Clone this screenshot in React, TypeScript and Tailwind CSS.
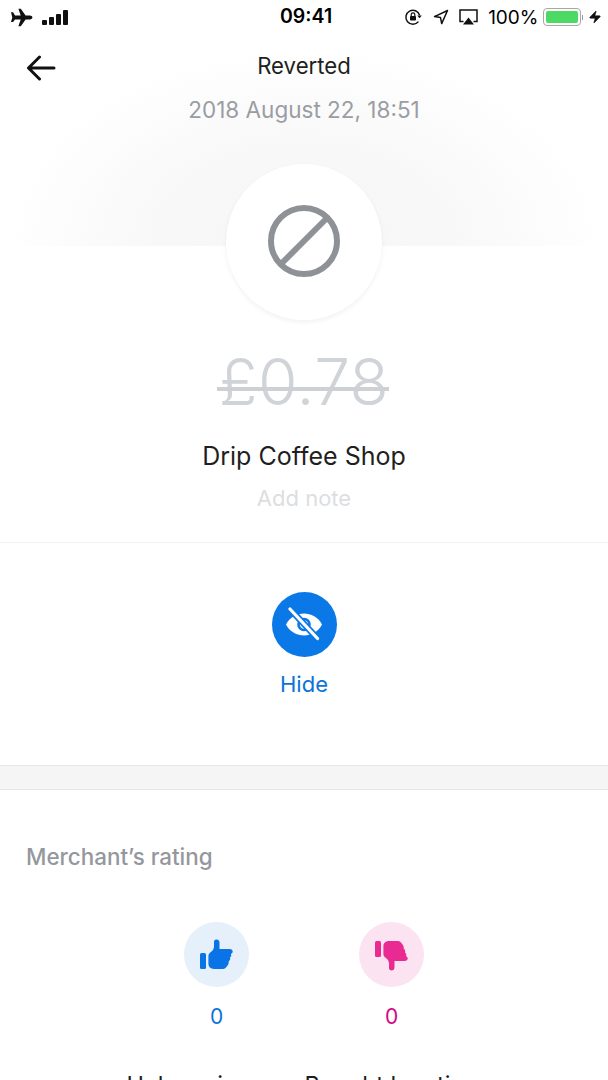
import React from 'react';
import { Zap } from 'lucide-react';

const font = "font-['Inter','Roboto',sans-serif]";

const StatusBar = () => (
  <div className="relative z-10 flex h-[34px] items-center justify-between pl-[9px] pr-[6px] text-black">
    <div className="flex items-center gap-[9px]">
      {/* airplane */}
      <svg width="24" height="19" viewBox="0 0 24 18" fill="#111">
        <path d="M9.4 0.2h2.4l4.8 6.9h4.2c1.6 0 2.6.8 2.6 1.9s-1 1.9-2.6 1.9h-4.2l-4.8 6.9H9.4l2.3-6.9H6l-1.9 2.5H2L3.3 9 2 3.8h2.1L6 7.1h5.7z" />
      </svg>
      <div className="flex items-end gap-[2px]">
        <div className="h-[5px] w-[5px] rounded-[1px] bg-[#111]" />
        <div className="h-[8px] w-[5px] rounded-[1px] bg-[#111]" />
        <div className="h-[11px] w-[5px] rounded-[1px] bg-[#111]" />
        <div className="h-[15px] w-[5px] rounded-[1px] bg-[#111]" />
      </div>
    </div>
    <div className="absolute left-[280px] top-[5px] text-[19.5px] leading-[23px] font-semibold">09:41</div>
    <div className="flex items-center">
      {/* rotation lock */}
      <svg width="18" height="18" viewBox="0 0 18 18" fill="none" className="mr-[11px]">
        <path d="M15.6 7.2A7 7 0 1 0 14.4 13.6" stroke="#111" strokeWidth="1.5" />
        <path d="M13.2 7.4h4.6l-2.3 2.8z" fill="#111" />
        <rect x="6" y="8" width="6" height="4.6" rx="0.8" fill="#111" />
        <path d="M7.2 8V6.6a1.8 1.8 0 0 1 3.6 0V8" stroke="#111" strokeWidth="1.2" />
      </svg>
      {/* location */}
      <svg width="16" height="16" viewBox="0 0 16 16" fill="none" className="mr-[10px]">
        <path d="M14.5 1.5 1.5 7.6l6 1 1.2 6z" stroke="#111" strokeWidth="1.5" strokeLinejoin="round" />
      </svg>
      {/* airplay */}
      <svg width="19" height="17" viewBox="0 0 19 17" fill="none" className="mr-[10px]">
        <path d="M4.5 12.5H1V1h17v11.5h-3.5" stroke="#111" strokeWidth="1.5" />
        <path d="M9.5 8.5 15 15.5H4z" fill="#111" />
      </svg>
      <span className="mr-[4px] text-[19px] leading-[23px]">100%</span>
      <div className="flex h-[18px] w-[38px] items-center rounded-[4px] border border-[#a8a8a8] p-[2px]">
        <div className="h-full w-full rounded-[2px] bg-[#4cd964]" />
      </div>
      <div className="ml-[1px] mr-[5px] h-[5px] w-[1.5px] bg-[#999]" />
      <Zap size={14} fill="#111" stroke="#111" strokeWidth={1} />
    </div>
  </div>
);

const BackArrow = () => (
  <svg width="30" height="26" viewBox="0 0 30 26" fill="none" className="absolute left-[26px] top-[21px]">
    <path d="M28 13H3M13.5 2 2.5 13l11 11" stroke="#111" strokeWidth="3" strokeLinecap="round" strokeLinejoin="round" />
  </svg>
);

const EyeOff = () => (
  <svg width="36" height="36" viewBox="0 0 36 36" fill="none">
    <path d="M0 17.5C4 10 11 6.5 18 6.5s14 3.5 18 11c-4 7.500-11 11-18 11s-14-3.500-18-11z" fill="#fff" />
    <circle cx="18" cy="17.5" r="5.500" fill="none" stroke="#0b78e8" strokeWidth="2.600" />
    <path d="M4.5 2.500 31 31" stroke="#0b78e8" strokeWidth="6.500" />
    <path d="M4 2 31.500 31.500" stroke="#fff" strokeWidth="3.200" strokeLinecap="round" />
  </svg>
);

const ThumbUp = ({ down }: { down?: boolean }) => (
  <svg
    width="34"
    height="32"
    viewBox="0 0 34 32"
    fill={down ? '#ea2a93' : '#0a74e6'}
    className={down ? 'rotate-180 -scale-x-100' : ''}
  >
    <rect x="0" y="14" width="6" height="16" rx="1.500" />
    <path d="M15 1c2-1.200 4.500 0 4.500 2.600V10h10c2.800 0 3.600 2 3 3.400-.2.600-.8 1.200-1.600 1.500.8 1.400.3 3-.9 3.700.5 1.500 0 3-1.300 3.700.2 1.800-.3 3.200-1.500 4.600-1 1.200-2.300 3-4.200 3H14c-3.400 0-5.600-2.200-5.600-5.200V17c0-1.600.8-2.800 2.200-3.800 2.200-1.500 3.400-3.400 3.400-6V2.400c0-.6.4-1.100 1-1.400z" />
  </svg>
);

const RatingItem = ({ down, label }: { down?: boolean; label: string }) => (
  <div className="flex w-[175px] flex-col items-center">
    <div
      className={`flex h-[65px] w-[65px] items-center justify-center rounded-full ${
        down ? 'bg-[#fbe3f1]' : 'bg-[#e6f0fa]'
      }`}
    >
      <ThumbUp down={down} />
    </div>
    <div className={`mt-[16px] text-[21px] leading-[28px] ${down ? 'text-[#d0097f]' : 'text-[#0a74d8]'}`}>0</div>
    <div className="mt-[39px] whitespace-nowrap text-[23.500px] leading-[30px] text-[#1c1c1e]">{label}</div>
  </div>
);

export default function App() {
  return (
    <div className={`relative h-[1080px] w-[608px] overflow-hidden bg-white ${font}`}>
      {/* soft grey fade behind the header */}
      <div className="absolute inset-x-0 top-0 h-[246px] bg-[radial-gradient(ellipse_300px_200px_at_50%_100%,#f7f7f8_0%,#f8f8f9_50%,#ffffff_100%)]" />

      <StatusBar />

      <div className="relative flex h-[112px] flex-col items-center pt-[17px]">
        <BackArrow />
        <div className="text-[22.200px] leading-[30px] text-[#1f1f21]">Reverted</div>
        <div className="mt-[14px] text-[22.500px] leading-[30px] text-[#9a9da3]">2018 August 22, 18:51</div>
      </div>

      <div className="relative flex h-[397px] flex-col items-center border-b border-[#f1f1f2]">
        <div className="mt-[18px] flex h-[156px] w-[156px] items-center justify-center rounded-full bg-white shadow-[0_2px_5px_rgba(0,0,0,0.06)]">
          <svg width="72" height="72" viewBox="0 0 72 72" fill="none" className="-mt-[2px]">
            <circle cx="36" cy="36" r="33" stroke="#8e9297" strokeWidth="6" />
            <path d="M13 59 59 13" stroke="#8e9297" strokeWidth="6" />
          </svg>
        </div>
        <div className="relative mt-[26px] text-[64px] leading-[72px] font-light tracking-[0.5px] text-[#d0d4d8]">
          £0.78
          <div className="absolute left-[-2px] right-0 top-[41px] h-[4px] bg-[#cdd1d5]" />
        </div>
        <div className="mt-[20px] text-[25px] leading-[36px] text-[#1f1f21]">Drip Coffee Shop</div>
        <div className="mt-[9px] text-[22px] leading-[30px] text-[#dcdee1]">Add note</div>
      </div>

      <div className="flex h-[222px] flex-col items-center pt-[49px]">
        <div className="flex h-[65px] w-[65px] items-center justify-center rounded-full bg-[#0b78e8]">
          <EyeOff />
        </div>
        <div className="mt-[12px] text-[22px] leading-[30px] text-[#0a74d8]">Hide</div>
      </div>

      <div className="h-[25px] border-y border-[#e6e6e7] bg-[#f5f5f6]" />

      <div className="pl-[26px] pt-[52px] text-[22.400px] leading-[30px] font-medium text-[#94979d]">Merchant’s rating</div>

      <div className="mt-[50px] flex justify-center">
        <RatingItem label="Help us improve" />
        <RatingItem down label="Bought location" />
      </div>
    </div>
  );
}
